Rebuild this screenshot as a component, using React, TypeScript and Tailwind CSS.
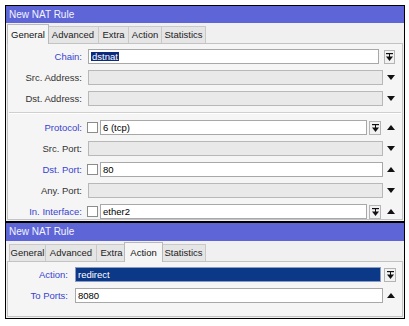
import React from 'react';

type Tab = { label: string; w: string };

const TABS: Tab[] = [
  { label: 'General', w: 'w-[36px]' },
  { label: 'Advanced', w: 'w-[51px]' },
  { label: 'Extra', w: 'w-[30px]' },
  { label: 'Action', w: 'w-[33px]' },
  { label: 'Statistics', w: 'w-[45px]' },
];

const ArrowUp = () => (
  <svg width="8" height="5" viewBox="0 0 8 5">
    <polygon points="0,5 8,5 4,0" fill="#111" />
  </svg>
);

const ArrowDown = () => (
  <svg width="8" height="5" viewBox="0 0 8 5">
    <polygon points="0,0 8,0 4,5" fill="#111" />
  </svg>
);

// little box with bar + down arrow (opens the list)
const ListButton: React.FC<{ className?: string }> = ({ className = '' }) => (
  <div className={`h-[14px] shrink-0 border border-[#b4b4b4] bg-[#f2f2f2] flex items-center justify-center ${className}`}>
    <svg width="7" height="8" viewBox="0 0 7 8">
      <rect x="0" y="0" width="7" height="1.2" fill="#111" />
      <rect x="3" y="1" width="1" height="3" fill="#111" />
      <polygon points="0,3.5 7,3.5 3.5,8" fill="#111" />
    </svg>
  </div>
);

const Check = () => (
  <div className="w-[11px] h-[11px] shrink-0 border border-[#8c8c8c] bg-white" />
);

const Field: React.FC<{ value?: React.ReactNode; disabled?: boolean; className?: string }> = ({
  value, disabled, className = '',
}) => (
  <div
    className={`h-[15px] flex-1 min-w-0 border flex items-center px-[2px] text-black ${
      disabled ? 'bg-[#e9e9e9] border-[#b8b8b8]' : 'bg-white border-[#a8a8a8]'
    } ${className}`}
  >
    {value}
  </div>
);

const Label: React.FC<{ text: string; blue?: boolean; w: string }> = ({ text, blue, w }) => (
  <div className={`${w} shrink-0 text-right whitespace-nowrap ${blue ? 'text-[#3842cf]' : 'text-[#333]'}`}>
    {text}
  </div>
);

const Window: React.FC<{ active: number; children: React.ReactNode; titleH: string; pb: string }> = ({
  active, children, titleH, pb,
}) => (
  <div className="w-[400px] border border-black bg-[#f0f0f0] flex flex-col">
    <div className={`${titleH} bg-[#5e65d7] text-[#f4f4ff] text-[10px] pl-[3px] flex items-center`}>New NAT Rule</div>
    <div className="h-[20px] flex items-end pl-[3px] relative">
      {TABS.map((t, i) =>
        i === active ? (
          <div
            key={t.label}
            className={`${t.w} box-content px-[2px] -mx-[2px] h-[19px] -mb-[1px] relative z-10 bg-[#f5f5f5] border-l border-t border-r border-[#b9b9b9] flex items-center justify-center text-[#111]`}
          >
            {t.label}
          </div>
        ) : (
          <div
            key={t.label}
            className={`${t.w} h-[17px] bg-[#e5e5e5] border-l border-t border-[#c9c9c9] last:border-r flex items-center justify-center text-[#222]`}
          >
            {t.label}
          </div>
        ),
      )}
    </div>
    <div className={`mx-[1px] mb-[1px] border border-[#c3c3c3] bg-[#f5f5f5] pt-[5px] ${pb} flex flex-col gap-[6px]`}>
      {children}
    </div>
  </div>
);

const Row: React.FC<{ children: React.ReactNode }> = ({ children }) => (
  <div className="h-[15px] flex items-center pr-[4px]">{children}</div>
);

const Trail: React.FC<{ children?: React.ReactNode }> = ({ children }) => (
  <div className="w-[15px] shrink-0 flex items-center justify-center">{children}</div>
);

export default function App() {
  return (
    <div
      className="w-[409px] h-[326px] bg-white pt-[5px] pl-[5px] text-[9.5px] leading-none overflow-hidden"
      style={{ fontFamily: '"Liberation Sans", Arial, sans-serif' }}
    >
      <Window active={0} titleH="h-[17px]" pb="pb-0">
        <Row>
          <Label text="Chain:" blue w="w-[74px]" />
          <div className="ml-[6px] flex-1 flex items-center">
            <Field value={<span className="bg-[#0b2a7c] text-white px-[1px] leading-[9px]">dstnat</span>} className="mr-[5px]" />
            <ListButton className="w-[11px]" />
            <div className="w-[3px]" />
          </div>
        </Row>
        <Row>
          <Label text="Src. Address:" w="w-[74px]" />
          <div className="ml-[6px] flex-1 flex"><Field disabled /></div>
          <Trail><ArrowDown /></Trail>
        </Row>
        <Row>
          <Label text="Dst. Address:" w="w-[74px]" />
          <div className="ml-[6px] flex-1 flex"><Field disabled /></div>
          <Trail><ArrowDown /></Trail>
        </Row>
        <div className="h-[2px] mx-[1px] border-t border-[#cfcfcf] border-b border-b-white" />
        <Row>
          <Label text="Protocol:" blue w="w-[74px]" />
          <div className="ml-[5px] flex-1 flex items-center">
            <Check />
            <Field value="6 (tcp)" className="ml-[2px] mr-[2px]" />
            <ListButton className="w-[12px] mr-[2px]" />
          </div>
          <Trail><ArrowUp /></Trail>
        </Row>
        <Row>
          <Label text="Src. Port:" w="w-[74px]" />
          <div className="ml-[6px] flex-1 flex"><Field disabled /></div>
          <Trail><ArrowDown /></Trail>
        </Row>
        <Row>
          <Label text="Dst. Port:" blue w="w-[74px]" />
          <div className="ml-[5px] flex-1 flex items-center">
            <Check />
            <Field value="80" className="ml-[2px]" />
          </div>
          <Trail><ArrowUp /></Trail>
        </Row>
        <Row>
          <Label text="Any. Port:" w="w-[74px]" />
          <div className="ml-[6px] flex-1 flex"><Field disabled /></div>
          <Trail><ArrowDown /></Trail>
        </Row>
        <Row>
          <Label text="In. Interface:" blue w="w-[74px]" />
          <div className="ml-[5px] flex-1 flex items-center">
            <Check />
            <Field value="ether2" className="ml-[2px] mr-[2px]" />
            <ListButton className="w-[12px] mr-[2px]" />
          </div>
          <Trail><ArrowUp /></Trail>
        </Row>
      </Window>

      <Window active={3} titleH="h-[18px]" pb="pb-[13px]">
        <Row>
          <Label text="Action:" blue w="w-[60px]" />
          <div className="ml-[7px] flex-1 flex items-center">
            <Field value={<span className="text-white">redirect</span>} className="!bg-[#0c3888] !border-[#8a9cc4] mr-[3px]" />
            <ListButton className="w-[12px]" />
            <div className="w-[2px]" />
          </div>
        </Row>
        <Row>
          <Label text="To Ports:" blue w="w-[60px]" />
          <div className="ml-[7px] flex-1 flex"><Field value="8080" /></div>
          <Trail><ArrowUp /></Trail>
        </Row>
      </Window>
    </div>
  );
}
